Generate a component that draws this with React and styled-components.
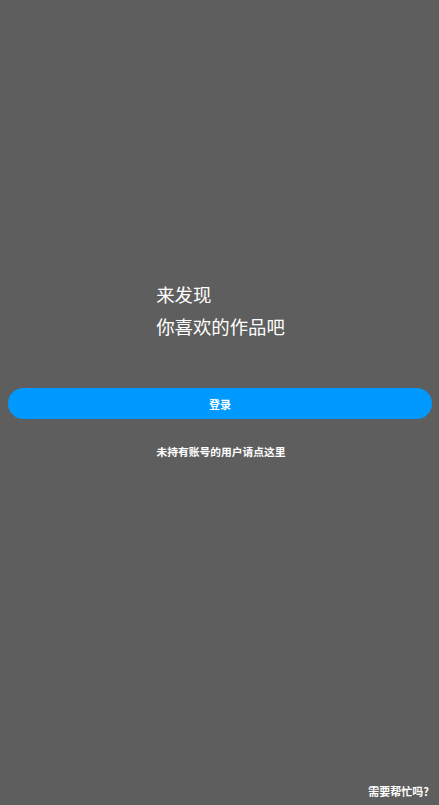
import React from "react";
import styled, { createGlobalStyle } from "styled-components";

const Global = createGlobalStyle`
  html, body { margin: 0; padding: 0; height: 100%; }
  body {
    background: #5e5e5e;
    font-family: "Noto Sans CJK SC", "Noto Sans", sans-serif;
    color: #ffffff;
  }
  #root { min-height: 100vh; }
`;

const Page = styled.div`
  min-height: 100vh;
  box-sizing: border-box;
  display: flex;
  flex-direction: column;
  padding: 278px 7px 6px 8px;
`;

const Slogan = styled.div`
  align-self: center;
  font-size: 18.4px;
  line-height: 32px;
  text-align: left;
  margin-left: 1px;
`;

const LoginButton = styled.button`
  margin-top: 46px;
  height: 31px;
  border: none;
  border-radius: 16px;
  background: #0099ff;
  color: #ffffff;
  font-family: inherit;
  font-size: 11px;
  font-weight: 700;
  cursor: pointer;
  padding: 0;
`;

const RegisterLink = styled.a`
  align-self: center;
  margin-top: 25px;
  font-size: 10.75px;
  line-height: 16px;
  font-weight: 700;
  color: #ffffff;
  text-decoration: none;
  margin-left: 2px;
`;

const Help = styled.a`
  margin-top: auto;
  align-self: flex-end;
  font-size: 11px;
  line-height: 16px;
  font-weight: 700;
  color: #ffffff;
  text-decoration: none;
  margin-right: 3px;
`;

export default function App() {
  return (
    <>
      <Global />
      <Page>
        <Slogan>
          <div>来发现</div>
          <div>你喜欢的作品吧</div>
        </Slogan>
        <LoginButton>登录</LoginButton>
        <RegisterLink href="#">未持有账号的用户请点这里</RegisterLink>
        <Help href="#">需要帮忙吗?</Help>
      </Page>
    </>
  );
}
